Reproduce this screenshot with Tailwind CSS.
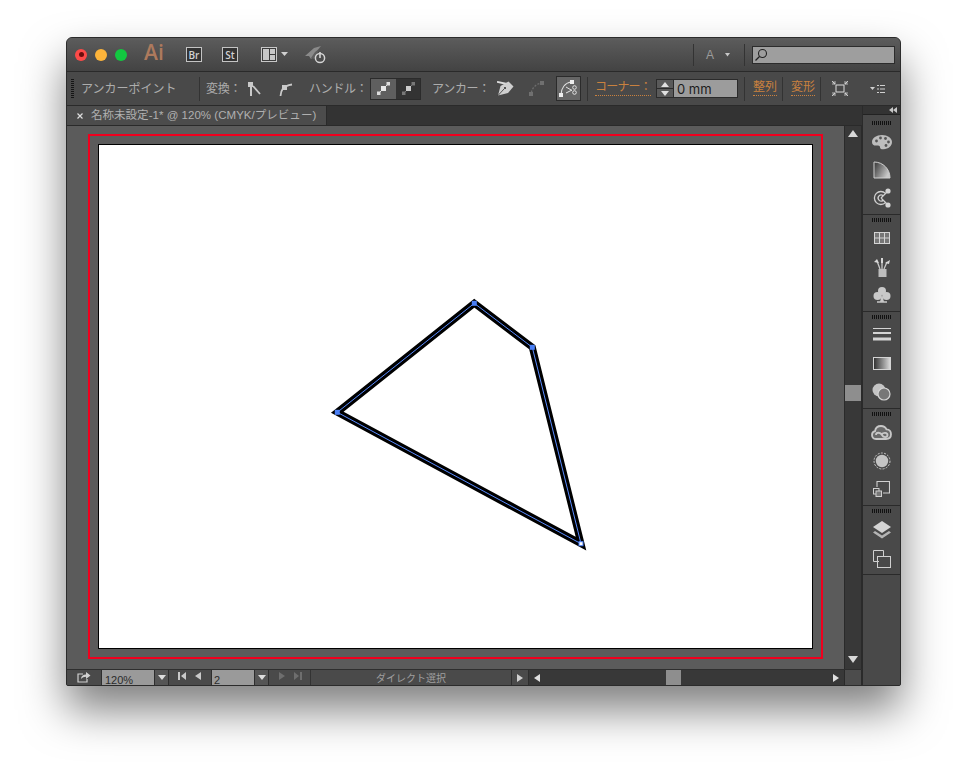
<!DOCTYPE html>
<html lang="ja">
<head>
<meta charset="UTF-8">
<title>Illustrator</title>
<script src="https://cdn.jsdelivr.net/npm/@tailwindcss/browser@4"></script>
</head>
<body class="bg-white w-[967px] h-[776px] overflow-hidden font-['Liberation_Sans','Noto_Sans_CJK_JP',sans-serif]">

<!-- window -->
<div class="mt-[37px] ml-[66px] w-[835px] h-[649px] flex flex-col rounded-t-[6px] rounded-b-[2px] border border-[#2b2b2b] bg-[#484848] shadow-[0_24px_44px_rgba(0,0,0,0.5)] overflow-hidden">

  <!-- title bar -->
  <div class="h-[34px] shrink-0 flex items-center bg-gradient-to-b from-[#5c5c5c] to-[#434343] border-b border-[#2a2a2a]">
    <div class="ml-[8px] w-[12px] h-[12px] rounded-full bg-[#fc4a48] flex items-center justify-center"><div class="w-[5px] h-[5px] rounded-full bg-[#6b0d0c]"></div></div>
    <div class="ml-[8px] w-[12px] h-[12px] rounded-full bg-[#fdb43a]"></div>
    <div class="ml-[8px] w-[12px] h-[12px] rounded-full bg-[#12c840]"></div>
    <div class="ml-[17px] w-[22px] pb-[4px] text-[21px] leading-none font-semibold text-[#ad7a5d] font-['Open_Sans',sans-serif]">Ai</div>
    <div class="ml-[20px] w-[16px] h-[15px] border border-[#c4c4c4] bg-[#333] text-[10px] font-semibold text-[#d2d2d2] flex items-center justify-center leading-none font-['Open_Sans',sans-serif]">Br</div>
    <div class="ml-[20px] w-[16px] h-[15px] border border-[#c4c4c4] bg-[#333] text-[10px] font-semibold text-[#d2d2d2] flex items-center justify-center leading-none font-['Open_Sans',sans-serif]">St</div>
    <svg class="ml-[23px]" width="28" height="16" viewBox="0 0 28 16"><rect x="0.500" y="0.500" width="15" height="14" fill="#3c3c3c" stroke="#c8c8c8"/><rect x="2" y="2" width="6" height="11" fill="#c8c8c8"/><rect x="9" y="2" width="5" height="5" fill="#c8c8c8"/><rect x="9" y="8" width="5" height="5" fill="#c8c8c8"/><path d="M20 5h7l-3.500 4z" fill="#d0d0d0"/></svg>
    <svg class="ml-[15px]" width="24" height="20" viewBox="0 0 24 20"><path d="M1 11L10 3l7-2-5 6-3 5-2 2-2-3z" fill="#8a8a8a"/><path d="M7 13l4-6 4-3-2 5-3 5z" fill="#5f5f5f"/><circle cx="16" cy="13" r="4.600" fill="none" stroke="#d4d4d4" stroke-width="1.500"/><path d="M16 7v6" stroke="#d4d4d4" stroke-width="1.600"/></svg>

    <div class="ml-[365px] w-px h-[22px] bg-[#333]"></div>
    <div class="ml-[12px] w-[10px] text-[12px] text-[#9c9c9c] leading-none">A</div>
    <svg class="ml-[9px]" width="5" height="4" viewBox="0 0 5 4"><path d="M0 0h5L2.500 3.500z" fill="#c8c8c8"/></svg>
    <div class="ml-[14px] w-px h-[22px] bg-[#333]"></div>
    <div class="ml-[7px] w-[143px] h-[18px] bg-[#9e9e9e] border border-[#2c2c2c] flex items-center">
      <svg class="ml-[1px]" width="14" height="14" viewBox="0 0 14 14"><circle cx="8.500" cy="5.500" r="4" fill="none" stroke="#222" stroke-width="1.100"/><path d="M5.500 8.500L1.500 12.500" stroke="#222" stroke-width="1.300"/></svg>
    </div>
  </div>

  <!-- control bar -->
  <div class="h-[34px] shrink-0 flex items-center bg-[#494949] border-b border-[#2a2a2a] text-[12px] leading-none text-[#adadad]">
    <div class="ml-[4px] w-[3px] h-[20px] bg-[repeating-linear-gradient(to_bottom,#151515_0,#151515_1px,transparent_1px,transparent_2px)]"></div>
    <div class="ml-[7px] w-[118px]">アンカーポイント</div>
    <div class="w-px h-[24px] bg-[#333]"></div>
    <div class="ml-[6px] w-[42px] tracking-[-0.3px]">変換：</div>
    <svg width="14" height="16" viewBox="0 0 14 16"><rect x="0" y="1" width="5" height="5" fill="#c9c9c9"/><path d="M3 6v9" stroke="#c9c9c9" stroke-width="2"/><path d="M5 5l7 8" stroke="#c9c9c9" stroke-width="1.800"/></svg>
    <svg class="ml-[17px]" width="14" height="16" viewBox="0 0 14 16"><path d="M1.500 15C2 9 3.500 5 13 3.500" fill="none" stroke="#c9c9c9" stroke-width="1.800"/><rect x="3" y="4" width="5" height="5" fill="#c9c9c9"/></svg>
    <div class="ml-[16px] w-[61px] tracking-[-0.3px]">ハンドル：</div>
    <div class="w-[51px] h-[22px] flex border border-[#2b2b2b]">
      <div class="w-[25px] bg-[#5f5f5f] flex items-center justify-center">
        <svg width="13" height="13" viewBox="0 0 13 13"><path d="M1 12L12 1" stroke="#e0e0e0" stroke-width="1"/><rect x="9.500" y="0" width="3.500" height="3.500" fill="#ddd"/><rect x="4" y="4" width="5" height="5" fill="#e8e8e8"/><rect x="0" y="9.500" width="3.500" height="3.500" fill="#ddd"/></svg>
      </div>
      <div class="flex-1 bg-[#333] flex items-center justify-center">
        <svg width="13" height="13" viewBox="0 0 13 13"><path d="M1 12L12 1" stroke="#777" stroke-width="1"/><rect x="9.500" y="0" width="3.500" height="3.500" fill="#777"/><rect x="4" y="4" width="5" height="5" fill="#ccc"/><rect x="0" y="9.500" width="3.500" height="3.500" fill="#777"/></svg>
      </div>
    </div>
    <div class="ml-[11px] w-[65px] tracking-[-0.3px]">アンカー：</div>
    <svg width="17" height="16" viewBox="0 0 17 16"><path d="M0 .8L10 3" stroke="#ddd" stroke-width="1.800"/><path d="M11.500 .5l5 5-5.500 6.500L1 14.500 3.500 5z" fill="#cfcfcf"/><path d="M1 14.500L7 8" stroke="#333" stroke-width="0.800"/><circle cx="8" cy="7" r="1.100" fill="#333"/></svg>
    <svg class="ml-[15px]" width="16" height="18" viewBox="0 0 16 18"><path d="M2 16C2 9 6 4 13 3" fill="none" stroke="#6c6c6c" stroke-width="1.300" stroke-dasharray="2 1.500"/><rect x="0" y="12" width="4" height="4" fill="#707070"/><rect x="11" y="1" width="4" height="4" fill="#707070"/></svg>
    <div class="ml-[11px] w-[25px] h-[25px] bg-[#666] border border-[#2b2b2b] flex items-center justify-center">
      <svg width="19" height="19" viewBox="0 0 19 19"><path d="M2 16C2 9 6 4 12 3" fill="none" stroke="#ddd" stroke-width="1.100"/><rect x="0" y="14" width="4" height="4" fill="#eee"/><rect x="11" y="1" width="4" height="4" fill="#eee"/><path d="M7 8l6 3.500M7 14l6-3" stroke="#e4e4e4" stroke-width="1"/><circle cx="15.500" cy="8.500" r="1.800" fill="none" stroke="#e4e4e4"/><circle cx="15.500" cy="13.500" r="1.800" fill="none" stroke="#e4e4e4"/></svg>
    </div>
    <div class="ml-[6px] w-px h-[24px] bg-[#333]"></div>
    <div class="ml-[7px] w-[56px] whitespace-nowrap text-[#c9813f] tracking-[-0.8px] pb-[2px] border-b border-dotted border-[#c9813f]">コーナー：</div>
    <div class="ml-[5px] w-[18px] h-[19px] flex flex-col border border-[#2b2b2b] bg-[#5a5a5a]">
      <div class="flex-1 flex items-center justify-center border-b border-[#2b2b2b]"><svg width="8" height="5" viewBox="0 0 8 5"><path d="M0 5h8L4 0z" fill="#e0e0e0"/></svg></div>
      <div class="flex-1 flex items-center justify-center"><svg width="8" height="5" viewBox="0 0 8 5"><path d="M0 0h8L4 5z" fill="#e0e0e0"/></svg></div>
    </div>
    <div class="w-[64px] h-[19px] bg-[#9c9c9c] border border-l-0 border-[#2b2b2b] text-[13px] text-[#1c1c1c] pl-[3px] pt-[3px] font-['Inter',sans-serif]">0 mm</div>
    <div class="ml-[6px] w-px h-[24px] bg-[#333]"></div>
    <div class="ml-[8px] w-[24px] text-[#c9813f] pb-[2px] border-b border-dotted border-[#c9813f]">整列</div>
    <div class="ml-[5px] w-px h-[24px] bg-[#333]"></div>
    <div class="ml-[8px] w-[24px] text-[#c9813f] pb-[2px] border-b border-dotted border-[#c9813f]">変形</div>
    <div class="ml-[5px] w-px h-[24px] bg-[#333]"></div>
    <svg class="ml-[11px]" width="16" height="15" viewBox="0 0 16 15"><rect x="4" y="4" width="8" height="7" fill="none" stroke="#d0d0d0" stroke-width="1.100"/><path d="M0 0l3 3M16 0l-3 3M0 15l3-3M16 15l-3-3" stroke="#d0d0d0" stroke-width="1.100"/><path d="M3 0v3H0M13 0v3h3M3 15v-3H0M13 15v-3h3" fill="none" stroke="#d0d0d0" stroke-width="0.800"/></svg>
    <svg class="ml-[22px]" width="15" height="10" viewBox="0 0 15 10"><path d="M0 3h5L2.500 6z" fill="#d0d0d0"/><path d="M7 1.500h2M7 5h2M7 8.500h2M10 1.500h5M10 5h5M10 8.500h5" stroke="#d0d0d0" stroke-width="1"/></svg>
  </div>

  <!-- main area -->
  <div class="flex-1 flex min-h-0">
    <div class="flex-1 flex flex-col min-w-0">

      <!-- tab strip -->
      <div class="h-[20px] shrink-0 flex bg-[#333] border-b border-[#2a2a2a]">
        <div class="w-[260px] bg-[#4c4c4c] border-r border-[#2a2a2a] flex items-center text-[11.500px] leading-none text-[#b0b0b0]">
          <svg class="ml-[10px]" width="6" height="6" viewBox="0 0 6 6"><path d="M0.500 0.500l5 5M5.500 0.500l-5 5" stroke="#ddd" stroke-width="1.200"/></svg>
          <span class="ml-[8px] whitespace-nowrap tracking-[0.03px]">名称未設定-1* @ 120% (CMYK/プレビュー)</span>
        </div>
      </div>

      <!-- canvas + vertical scrollbar -->
      <div class="flex-1 flex min-h-0">
        <div class="flex-1 bg-[#5b5b5b] pt-[8px] px-[21px] pb-[10px] min-w-0">
          <div class="h-full border-2 border-[#f0001e] p-[8px]">
            <div class="relative h-full bg-white border border-black">
              <svg class="absolute inset-0" width="713" height="503" viewBox="99 145 713 503">
                <polygon points="474.300,303.300 532.300,347.300 581,543.700 337.300,412.300" fill="none" stroke="#000000" stroke-width="7" stroke-miterlimit="10"/>
                <polygon points="474.300,303.300 532.300,347.300 581,543.700 337.300,412.300" fill="none" stroke="#5a8cff" stroke-width="1"/>
                <rect x="471.800" y="300.800" width="5" height="5" fill="#4a7ff5"/>
                <rect x="529.800" y="344.800" width="5" height="5" fill="#4a7ff5"/>
                <rect x="334.800" y="409.800" width="5" height="5" fill="#4a7ff5"/>
                <rect x="579" y="541.700" width="4" height="4" fill="#fff" stroke="#4a7ff5" stroke-width="1"/>
              </svg>
            </div>
          </div>
        </div>
        <!-- vertical scrollbar -->
        <div class="w-[18px] shrink-0 bg-[#383838] border-l border-r border-[#2a2a2a] flex flex-col items-center">
          <svg class="mt-[4px]" width="10" height="8" viewBox="0 0 10 8"><path d="M0 7h10L5 0z" fill="#d8d8d8"/></svg>
          <div class="mt-[247px] w-full h-[16px] bg-[#8e8e8e]"></div>
          <div class="flex-1"></div>
          <svg class="mb-[5px]" width="10" height="8" viewBox="0 0 10 8"><path d="M0 0h10L5 7z" fill="#d8d8d8"/></svg>
        </div>
      </div>

      <!-- status bar -->
      <div class="h-[16px] shrink-0 flex bg-[#4a4a4a] border-t border-[#2e2e2e] text-[#adadad] text-[11px] leading-none">
        <svg class="ml-[10px] mt-[1px]" width="14" height="12" viewBox="0 0 14 12"><path d="M6 3H1v8h9V8" fill="none" stroke="#d0d0d0" stroke-width="1.200"/><path d="M4 8c0-3 2-4.500 5-4.500V1l4.500 3.500L9 8V5.800C7 5.800 5.500 6.500 4 8z" fill="#d0d0d0"/></svg>
        <div class="ml-[10px] w-[53px] bg-[#9a9a9a] text-[#2b2b2b] pl-[3px] pt-[5px] overflow-hidden border-l border-[#2e2e2e]">120%</div>
        <div class="w-[15px] flex items-center justify-center border-x border-[#2e2e2e] bg-[#555]"><svg width="8" height="5" viewBox="0 0 8 5"><path d="M0 0h8L4 5z" fill="#ddd"/></svg></div>
        <svg class="ml-[9px] mt-[2px]" width="8" height="8" viewBox="0 0 8 8"><path d="M0 0h2v8H0zM8 0v8L3 4z" fill="#c9c9c9"/></svg>
        <svg class="ml-[9px] mt-[2px]" width="6" height="8" viewBox="0 0 6 8"><path d="M6 0v8L0 4z" fill="#c9c9c9"/></svg>
        <div class="ml-[10px] w-[43px] bg-[#9a9a9a] text-[#2b2b2b] pl-[2px] pt-[5px] overflow-hidden border-l border-[#2e2e2e]">2</div>
        <div class="w-[15px] flex items-center justify-center border-x border-[#2e2e2e] bg-[#555]"><svg width="8" height="5" viewBox="0 0 8 5"><path d="M0 0h8L4 5z" fill="#ddd"/></svg></div>
        <svg class="ml-[10px] mt-[2px]" width="6" height="8" viewBox="0 0 6 8"><path d="M0 0v8l6-4z" fill="#6e6e6e"/></svg>
        <svg class="ml-[9px] mt-[2px]" width="8" height="8" viewBox="0 0 8 8"><path d="M0 0v8l5-4zM6 0h2v8H6z" fill="#6e6e6e"/></svg>
        <div class="ml-[8px] w-[201px] border-l border-[#333] text-center pt-[4px] whitespace-nowrap overflow-hidden text-[10px] text-[#9f9f9f]">ダイレクト選択</div>
        <div class="w-[18px] flex items-center justify-center border-x border-[#2e2e2e]"><svg width="6" height="8" viewBox="0 0 6 8"><path d="M0 0v8l6-4z" fill="#d0d0d0"/></svg></div>
        <!-- horizontal scrollbar -->
        <div class="flex-1 flex items-center bg-[#383838]">
          <svg class="ml-[5px]" width="6" height="8" viewBox="0 0 6 8"><path d="M6 0v8L0 4z" fill="#e0e0e0"/></svg>
          <div class="ml-[126px] w-[15px] h-full bg-[#8e8e8e]"></div>
          <div class="flex-1"></div>
          <svg class="mr-[5px]" width="6" height="8" viewBox="0 0 6 8"><path d="M0 0v8l6-4z" fill="#e0e0e0"/></svg>
        </div>
        <div class="w-[18px] bg-[#4c4c4c] border-x border-[#2a2a2a]"></div>
      </div>
    </div>

    <!-- right panel dock -->
    <div class="w-[38px] shrink-0 flex flex-col bg-[#494949] border-l border-[#2a2a2a]">
      <div class="h-[9px] shrink-0 bg-[#333] border-b border-[#222] flex justify-end items-center pr-[3px]">
        <svg width="8" height="6" viewBox="0 0 8 6"><path d="M4 0v6L0 3zM8 0v6L4 3z" fill="#c8c8c8"/></svg>
      </div>

      <!-- group 1 -->
      <div class="h-[100px] shrink-0 border-b border-[#2a2a2a] flex flex-col items-center pt-[6px]">
        <div class="w-[20px] h-[4px] shrink-0 bg-[repeating-linear-gradient(to_right,#111_0,#111_1px,transparent_1px,transparent_2px)]"></div>
        <div class="mt-[3px] h-[28px] flex items-center">
          <svg width="20" height="16" viewBox="0 0 20 16"><path d="M10 1C4.500 1 0 4 0 8c0 3 2.500 4 5 3.500 2-.4 3 .3 3 1.800 0 1.500 1.500 2.200 3.500 2C16.500 15 20 12 20 8c0-4-4.500-7-10-7z" fill="#bdbdbd"/><circle cx="4.500" cy="7" r="1.400" fill="#555"/><circle cx="8.500" cy="4" r="1.400" fill="#555"/><circle cx="13.500" cy="4.500" r="1.400" fill="#555"/><circle cx="16.500" cy="8" r="1.400" fill="#555"/><circle cx="14" cy="11.500" r="1.400" fill="#555"/></svg>
        </div>
        <div class="h-[28px] flex items-center">
          <svg width="18" height="18" viewBox="0 0 18 18"><defs><linearGradient id="fan" x1="0" y1="0" x2="1" y2="0.500"><stop offset="0" stop-color="#333"/><stop offset="1" stop-color="#c8c8c8"/></linearGradient></defs><path d="M1 1C10 1 17 8 17 17H1z" fill="url(#fan)" stroke="#d0d0d0" stroke-width="1"/></svg>
        </div>
        <div class="h-[28px] flex items-center">
          <svg width="18" height="20" viewBox="0 0 18 20"><path d="M12.500 5.400A6.500 6.500 0 1 0 12.500 14.600" fill="none" stroke="#d0d0d0" stroke-width="1.300"/><path d="M10.200 7.800A3 3 0 1 0 10.200 12.200" fill="none" stroke="#d0d0d0" stroke-width="1.300"/><path d="M8 10L15 3M8 10l7 7" stroke="#d0d0d0" stroke-width="1.300"/><circle cx="15" cy="3" r="2.600" fill="#d4d4d4"/><circle cx="15" cy="17" r="2.600" fill="#d4d4d4"/></svg>
        </div>
      </div>

      <!-- group 2 -->
      <div class="h-[97px] shrink-0 border-b border-[#2a2a2a] flex flex-col items-center pt-[3px]">
        <div class="w-[20px] h-[4px] shrink-0 bg-[repeating-linear-gradient(to_right,#111_0,#111_1px,transparent_1px,transparent_2px)]"></div>
        <div class="mt-[1px] h-[30px] flex items-center">
          <svg width="16" height="12" viewBox="0 0 16 12"><rect x="0.500" y="0.500" width="15" height="11" fill="#777" stroke="#d4d4d4"/><path d="M0 6h16M5.500 0v12M10.500 0v12" stroke="#d4d4d4" stroke-width="1"/></svg>
        </div>
        <div class="h-[28px] flex items-center">
          <svg width="16" height="19" viewBox="0 0 16 19"><rect x="4.500" y="11" width="8" height="8" fill="#bdbdbd"/><path d="M6 11L3 3M8 11V2M10 11L13 4" stroke="#c8c8c8" stroke-width="1.300"/><path d="M0 4l3-3 2 4zM7 0h2v5H7zM11 5l5-3-1 4z" fill="#d8d8d8"/></svg>
        </div>
        <div class="h-[27px] flex items-center">
          <svg width="18" height="17" viewBox="0 0 18 17"><circle cx="9" cy="5" r="4" fill="#c8c8c8"/><circle cx="4.500" cy="10" r="4" fill="#c8c8c8"/><circle cx="13.500" cy="10" r="4" fill="#c8c8c8"/><path d="M9 7l2 9H7z" fill="#c8c8c8"/><path d="M4 16h10" stroke="#c8c8c8" stroke-width="1.500"/></svg>
        </div>
      </div>

      <!-- group 3 -->
      <div class="h-[97px] shrink-0 border-b border-[#2a2a2a] flex flex-col items-center pt-[3px]">
        <div class="w-[20px] h-[4px] shrink-0 bg-[repeating-linear-gradient(to_right,#111_0,#111_1px,transparent_1px,transparent_2px)]"></div>
        <div class="mt-[1px] h-[29px] flex items-center">
          <svg width="18" height="13" viewBox="0 0 18 13"><path d="M0 .500h18" stroke="#d4d4d4" stroke-width="1"/><path d="M0 5h18" stroke="#d4d4d4" stroke-width="2"/><path d="M0 11h18" stroke="#d4d4d4" stroke-width="3"/></svg>
        </div>
        <div class="h-[28px] flex items-center">
          <svg width="18" height="13" viewBox="0 0 18 13"><defs><linearGradient id="grad"><stop offset="0" stop-color="#2e2e2e"/><stop offset="1" stop-color="#ddd"/></linearGradient></defs><rect x="0.500" y="0.500" width="17" height="12" fill="url(#grad)" stroke="#d4d4d4"/></svg>
        </div>
        <div class="h-[29px] flex items-center">
          <svg width="19" height="18" viewBox="0 0 19 18"><circle cx="7" cy="7" r="6.500" fill="#c4c4c4"/><circle cx="12" cy="11" r="6" fill="#777" stroke="#d4d4d4" stroke-width="1.200"/></svg>
        </div>
      </div>

      <!-- group 4 -->
      <div class="h-[97px] shrink-0 border-b border-[#2a2a2a] flex flex-col items-center pt-[3px]">
        <div class="w-[20px] h-[4px] shrink-0 bg-[repeating-linear-gradient(to_right,#111_0,#111_1px,transparent_1px,transparent_2px)]"></div>
        <div class="mt-[2px] h-[29px] flex items-center">
          <svg width="21" height="15" viewBox="0 0 21 15"><path d="M6 14H5C2 14 1 12 1 10c0-2 1-3.500 3-3.800C4.500 3 7 1 10 1c2.500 0 4.500 1.200 5.500 3.300 3-.2 4.500 2.500 4.500 5 0 2.800-2 4.700-5 4.700H6z" fill="#6a6a6a" stroke="#c8c8c8" stroke-width="1.800"/><path d="M5 10c0-3 4.500-3 6 0s5.500 2.500 5.500 0-4-3-6-.5" fill="none" stroke="#c8c8c8" stroke-width="1.800"/></svg>
        </div>
        <div class="h-[28px] flex items-center">
          <svg width="18" height="18" viewBox="0 0 18 18"><circle cx="9" cy="9" r="8" fill="none" stroke="#c8c8c8" stroke-width="1" stroke-dasharray="2 1.300"/><circle cx="9" cy="9" r="6.200" fill="#c4c4c4"/></svg>
        </div>
        <div class="h-[28px] flex items-center">
          <svg width="17" height="16" viewBox="0 0 17 16"><path d="M4 6V.5h12.500V12H10" fill="none" stroke="#d0d0d0" stroke-width="1.100"/><rect x="0.500" y="7.500" width="5.500" height="5.500" fill="none" stroke="#d0d0d0"/><rect x="3" y="10" width="5.500" height="5.500" fill="#777" stroke="#d0d0d0"/></svg>
        </div>
      </div>

      <!-- group 5 -->
      <div class="h-[69px] shrink-0 border-b border-[#2a2a2a] flex flex-col items-center pt-[3px]">
        <div class="w-[20px] h-[4px] shrink-0 bg-[repeating-linear-gradient(to_right,#111_0,#111_1px,transparent_1px,transparent_2px)]"></div>
        <div class="mt-[2px] h-[30px] flex items-center">
          <svg width="18" height="18" viewBox="0 0 18 18"><path d="M9 0l9 6-9 6-9-6z" fill="#d4d4d4"/><path d="M2 10l7 4.500 7-4.500 2 1.500-9 6-9-6z" fill="#b4b4b4"/></svg>
        </div>
        <div class="h-[27px] flex items-center">
          <svg width="18" height="18" viewBox="0 0 18 18"><path d="M6 11.500H.5V.5h10v6" fill="none" stroke="#d0d0d0" stroke-width="1"/><rect x="4.500" y="6.500" width="13" height="11" fill="none" stroke="#d0d0d0"/></svg>
        </div>
      </div>
    </div>
  </div>
</div>
</body>
</html>
